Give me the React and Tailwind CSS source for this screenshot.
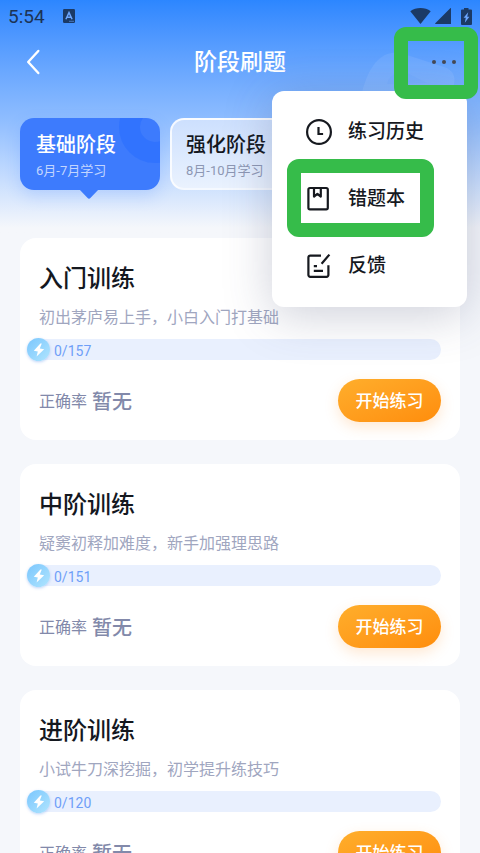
import clsx from "clsx";

const stages = [
    { title: "基础阶段", period: "6月-7月学习", active: true },
    { title: "强化阶段", period: "8月-10月学习", active: false },
];

const trainings = [
    { title: "入门训练", description: "初出茅庐易上手，小白入门打基础", total: 157 },
    { title: "中阶训练", description: "疑窦初释加难度，新手加强理思路", total: 151 },
    { title: "进阶训练", description: "小试牛刀深挖掘，初学提升练技巧", total: 120 },
];

function HistoryIcon() {
    return (
        <svg className="size-7" viewBox="0 0 28 28" fill="none" stroke="currentColor" strokeWidth="2.2">
            <circle cx="15" cy="14" r="11.9" />
            <path d="M14.5 9v7h4.6" />
        </svg>
    );
}

function NotebookIcon() {
    return (
        <svg className="size-7" viewBox="0 0 28 28" fill="none" stroke="currentColor" strokeWidth="2.2" strokeLinejoin="round">
            <rect x="4.4" y="3" width="19.4" height="21.4" rx="1.6" />
            <path d="M10 3.4v8.2l3.4-2.8 3.4 2.8V3.4" />
        </svg>
    );
}

function FeedbackIcon() {
    return (
        <svg className="size-7" viewBox="0 0 28 28" fill="none" stroke="currentColor" strokeWidth="2.2">
            <path d="M17 3.6H6.200a1.800 1.800 0 0 0-1.800 1.800v17.600a1.800 1.800 0 0 0 1.800 1.800h16.400a1.800 1.800 0 0 0 1.800-1.800V13.200" />
            <path d="M25.400 2.600l-7.800 9.200M9.800 14.200h3.200M9.800 18.800h9.200" />
        </svg>
    );
}

const menuItems = [
    { label: "练习历史", icon: HistoryIcon },
    { label: "错题本", icon: NotebookIcon, marked: true },
    { label: "反馈", icon: FeedbackIcon },
];

function StatusBar() {
    return (
        <div className="flex items-center h-8 pl-2 pr-2 text-[#1b3a66]">
            <span className="pt-0.5 text-[19px] leading-8 text-[#1c3355]">5:54</span>
            <svg className="ml-[18px] w-3 h-3.5" viewBox="0 0 12 14">
                <rect width="12" height="14" rx="1.2" fill="currentColor" />
                <path d="M2.900 10.200L6 3.600l3.100 6.600M4 8.200h4" fill="none" stroke="#6ba6ff" strokeWidth="1.500" />
                <path d="M6 12.300h5" stroke="#6ba6ff" strokeWidth="0.600" />
            </svg>
            <div className="flex items-center ml-auto">
                <svg className="w-[21px] h-4" viewBox="0 0 21 16" fill="currentColor">
                    <path d="M10.500 16L0.300 3.200C3.200 1 6.700 0 10.500 0s7.300 1 10.200 3.200z" />
                </svg>
                <svg className="ml-1 size-4" viewBox="0 0 16 16" fill="currentColor">
                    <path d="M15 0.500a0.500 0.500 0 0 1 1 0V16H1a0.500 0.500 0 0 1-0.500-1z" />
                </svg>
                <svg className="ml-2.5 w-[11px] h-[17px]" viewBox="0 0 11 17">
                    <path d="M3 0h4.500v1.600H10a1 1 0 0 1 1 1V16a1 1 0 0 1-1 1H1a1 1 0 0 1-1-1V2.600a1 1 0 0 1 1-1h2z" fill="currentColor" />
                    <path d="M7.200 4.200L2.600 9.800h2.200l-1 5 4.600-6H6.200z" fill="#6ba6ff" />
                </svg>
            </div>
        </div>
    );
}

function MoreMenu() {
    return (
        <div className="absolute right-[13px] top-[91px] z-10 w-[195px] pt-[7px] pb-2 rounded-xl bg-white shadow-[0_8px_48px_rgba(60,70,110,0.26)]">
            {menuItems.map(({ label, icon: Icon, marked }) => (
                <button key={label} type="button" className="relative flex items-center gap-4 w-full h-[67px] pl-8 text-[19px] font-medium text-[#16191f]">
                    <Icon />
                    <span className="pt-0.5">{label}</span>
                    {marked && <span className="absolute left-[15px] -top-[6px] w-[147px] h-[78px] rounded-xl border-14 border-[#36bc4a]" />}
                </button>
            ))}
        </div>
    );
}

function Header() {
    return (
        <header className="flex items-center justify-between h-15 pl-5">
            <button type="button" aria-label="返回" className="text-white">
                <svg className="size-7" viewBox="0 0 28 28" fill="none" stroke="currentColor" strokeWidth="2.400" strokeLinecap="round" strokeLinejoin="round">
                    <path d="M18.300 3L8.200 14l10.100 11" />
                </svg>
            </button>
            <h1 className="absolute inset-x-0 pt-[3px] text-center text-[23px] font-medium text-white pointer-events-none">阶段刷题</h1>
            <svg className="absolute right-6 top-[50px] w-24 h-[42px]" viewBox="0 0 96 42">
                <path d="M2 42C6 28 10 18 18 10C25 3 34 1 44 4L84 17C93 20 96 27 94 34L92 42z" fill="#fff" fillOpacity="0.080" />
                <path d="M27 34c2-10 12-14 22-10l18 9z" fill="#3f86ff" fillOpacity="0.080" />
            </svg>
            <button type="button" aria-label="更多" className="relative z-20 flex items-center justify-end w-[84px] h-[72px] mr-0.5 mt-0.5 pr-2 rounded-xl border-14 border-[#36bc4a] text-[#444955]">
                <svg className="w-6 h-2" viewBox="0 0 24 8" fill="currentColor">
                    <circle cx="2" cy="3" r="2" />
                    <circle cx="12" cy="3" r="2" />
                    <circle cx="22" cy="3" r="2" />
                </svg>
            </button>
        </header>
    );
}

function StageTab({ title, period, active }) {
    return (
        <button
            type="button"
            className={clsx(
                "relative w-[140px] h-[72px] shrink-0 pt-1.5 rounded-[14px] text-left",
                active
                    ? "px-4 bg-[#3d7bfd] text-white shadow-[0_6px_16px_rgba(61,123,253,0.2)]"
                    : "px-3.5 border-2 border-white/80 bg-linear-to-b from-[#cde0fe] to-[#eaf2fe] text-[#14181f]"
            )}
        >
            {active && (
                <>
                    <svg className="absolute right-0 top-0 size-12 rounded-tr-[14px]" viewBox="0 0 48 48">
                        <circle cx="43" cy="9" r="25.500" fill="none" stroke="#246afe" strokeOpacity="0.450" strokeWidth="21" />
                    </svg>
                    <svg className="absolute left-[59px] top-[71px] w-5 h-2.5" viewBox="0 0 20 10">
                        <path d="M0 0h20l-8.400 8.800a2.200 2.200 0 0 1-3.200 0z" fill="#3d7bfd" />
                    </svg>
                </>
            )}
            <span className="relative block text-xl leading-7 font-medium">{title}</span>
            <span className={clsx("relative block text-[13px] leading-6", active ? "text-white/70" : "text-[#8d97b3]")}>{period}</span>
        </button>
    );
}

function TrainingCard({ title, description, total }) {
    return (
        <section className="pt-[25px] pb-[18px] px-[19px] rounded-2xl bg-white">
            <h2 className="text-2xl leading-8 font-medium text-[#14181f]">{title}</h2>
            <p className="mt-[11px] text-base leading-6 text-[#a0a6bf]">{description}</p>
            <div className="flex items-center h-[21px] mt-[9px] -ml-3 rounded-full bg-[#e9f0fe] text-sm text-[#6f9ff8]">
                <span className="flex items-center justify-center size-[23px] rounded-full bg-linear-to-br from-[#7ac6fd] to-[#b0e5fe] shadow-[0_1px_3px_rgba(110,160,240,0.45)]">
                    <svg className="size-3.5" viewBox="0 0 14 14" fill="#fff">
                        <path d="M8.400 0.600L1.800 7.800l4 0.600-1.200 5 7.600-7.200-4.400-0.800 2-4.800z" />
                    </svg>
                </span>
                <span className="ml-1 pt-0.5">0/{total}</span>
            </div>
            <div className="flex items-center justify-between mt-[19px]">
                <div className="flex items-center gap-[5px] pt-0.5 text-[#8289aa]">
                    <span className="text-base">正确率</span>
                    <strong className="text-xl font-medium">暂无</strong>
                </div>
                <button type="button" className="w-[103px] h-[43px] pt-0.5 rounded-full bg-linear-to-br from-[#ffae2b] to-[#ff8d0a] text-[17px] font-medium text-white shadow-[0_5px_14px_rgba(255,150,50,0.22)]">
                    开始练习
                </button>
            </div>
        </section>
    );
}

export default function App() {
    return (
        <div className="relative min-h-screen overflow-hidden bg-[#f5f7fb] font-[Roboto,'Noto_Sans_CJK_SC',sans-serif]">
            <div className="absolute inset-x-0 top-0 h-60 bg-linear-to-b from-[#2c86ff] from-0% via-[#8fbdff] via-50% to-[#f5f7fb] to-95%" />
            <div className="relative">
                <StatusBar />
                <Header />
                <MoreMenu />
                <nav className="flex gap-2.5 mt-[26px] px-5">
                    {stages.map((stage) => (
                        <StageTab key={stage.title} {...stage} />
                    ))}
                </nav>
                <main className="flex flex-col gap-6 mt-12 px-5 pb-6">
                    {trainings.map((training) => (
                        <TrainingCard key={training.title} {...training} />
                    ))}
                </main>
            </div>
        </div>
    );
}
